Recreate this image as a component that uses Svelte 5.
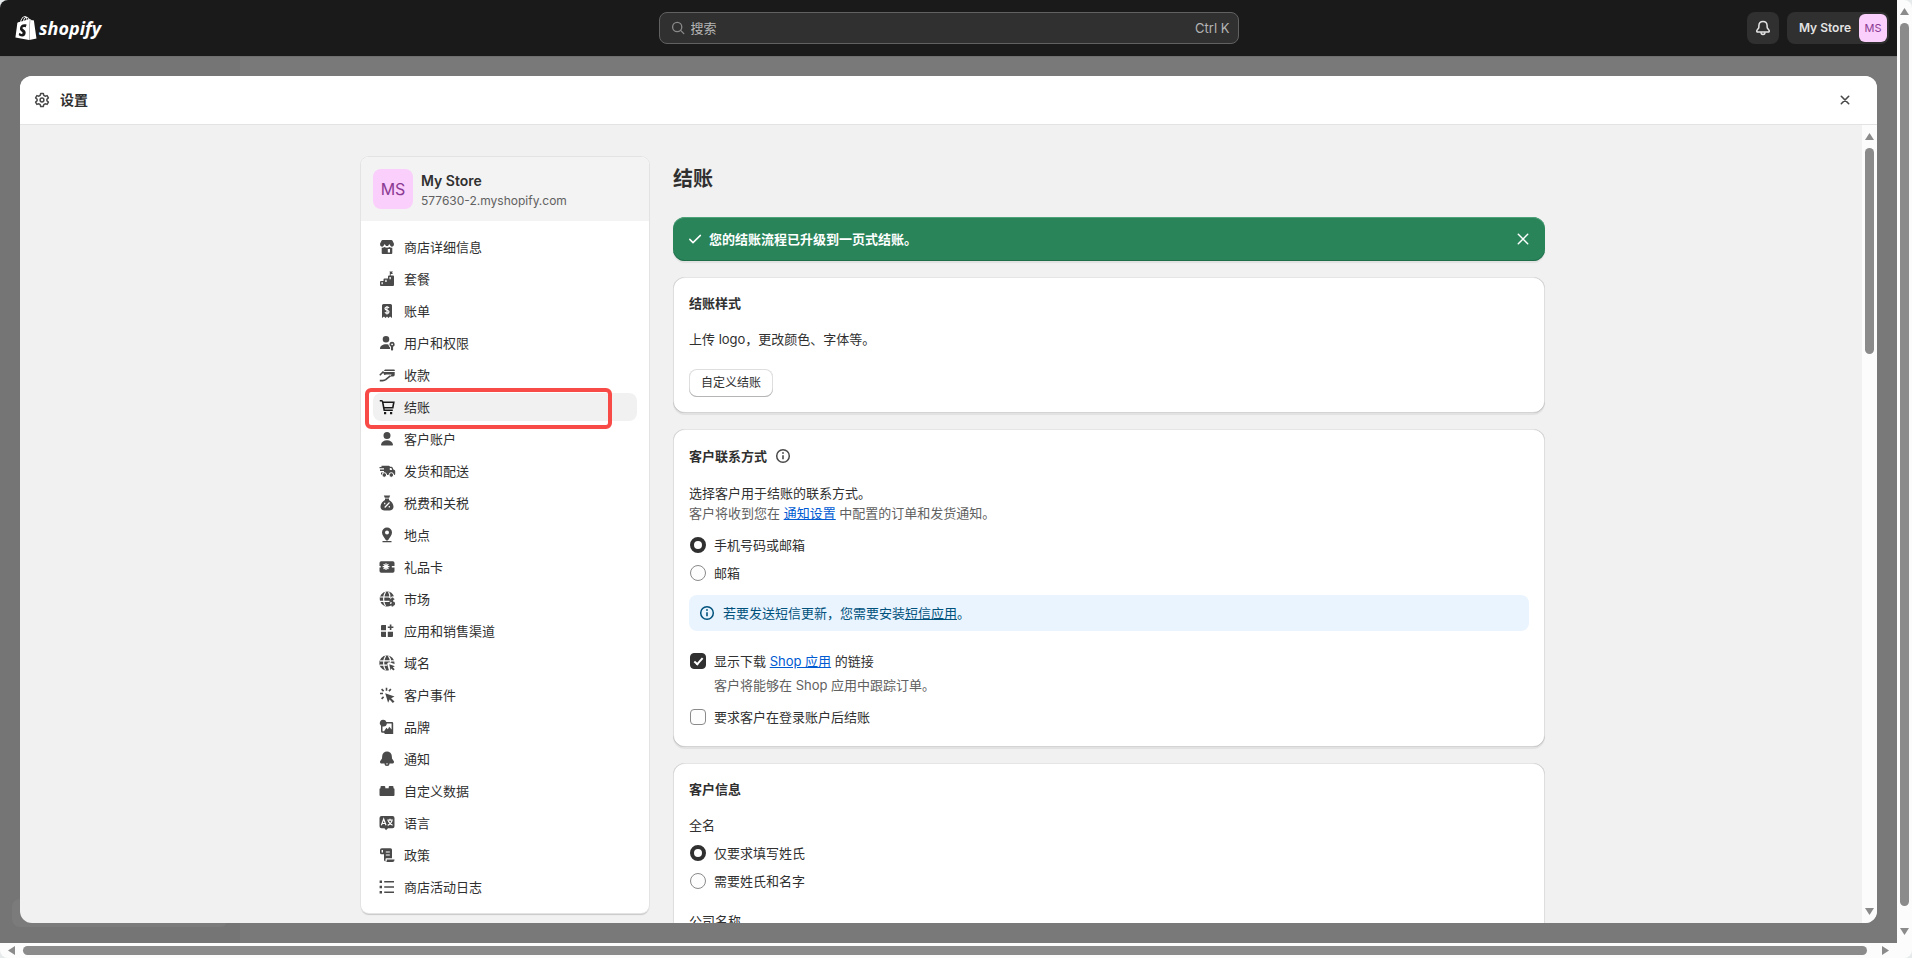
<script>
  // fill: solid shapes, cut: white strokes over them, line: strokes in the icon colour
  const icons = {
    store: {
      fill: 'M5.600 3h8.800c.5 0 .9.2 1.100.7L16.900 6.600v1.100a1.900 1.900 0 0 1-3.300 1.300L12.300 7l-1.300 2H9L7.700 7 6.400 9a1.900 1.900 0 0 1-3.300-1.300V6.600l1.400-2.900c.2-.5.6-.7 1.100-.7zM4.700 10.700c1 .2 2 0 2.700-.7 1.400 1.100 3.800 1.100 5.200 0 .7.7 1.700.9 2.700.7V16a1 1 0 0 1-1 1H5.700a1 1 0 0 1-1-1zM10.800 12v3.500h2.200V12z'
    },
    plan: {
      fill: 'M3 13a1 1 0 0 1 1-1h2.500v-1.500a1 1 0 0 1 1-1H11V7.500a1 1 0 0 1 1-1h4a1 1 0 0 1 1 1V16a1 1 0 0 1-1 1H4a1 1 0 0 1-1-1zM4.500 13.300v2h1.300v-2zM8.300 10.800v2.200h1.300v-2.200zM12.500 8v2.200h1.300V8zM12.300 2.500h3.600l-.8 1.300.8 1.200h-2.200v1.500h-.9V3z'
    },
    bill: {
      fill: 'M6.500 3h7A1.500 1.500 0 0 1 15 4.500V17l-2-1.400-1.500 1.400-1.500-1.400L8.500 17 7 15.600 5 17V4.500A1.500 1.500 0 0 1 6.500 3z',
      cut: 'M12 7c-.4-.8-1.200-1-2-1-1.100 0-2 .6-2 1.600 0 2.300 4 1 4 3.200 0 1-.9 1.600-2 1.600-.9 0-1.700-.3-2-1.100M10 4.900v8.600'
    },
    users: {
      fill: 'M12.300 6.300a3.300 3.300 0 1 1-6.600 0 3.300 3.300 0 0 1 6.600 0zM3 15.800c0-2.900 2.700-4.500 6-4.500 1 0 1.900.1 2.600.4.100 1.300.8 2.200 1.500 2.700V16H3.200a.2.200 0 0 1-.2-.2zM15.100 8.800a2.600 2.600 0 0 1 1 5V17l-1.100.7-1-.7v-3.200a2.600 2.600 0 0 1 1.100-5zM15.100 10.400a.9.900 0 1 0 0 1.800.9.900 0 0 0 0-1.800z'
    },
    pay: {
      fill: 'M8 4.500h9a.8.8 0 0 1 .8.800V6H6.800zM5.700 7h12v2.800a1.600 1.600 0 0 1-1.600 1.600h-3.400l2-1.900H9.600L7.300 10z',
      line: 'M2.800 10.300 6.500 6.500M2.800 15.600h2.800c1.200 0 2.200-.2 3.100-.9l4.600-3.900'
    },
    cart: {
      line: 'M2.800 3.800h1.700c.6 0 1 .4 1.100.9L7.200 13.200H15.800M5.800 5.300h11l-1 5.400H7',
      fill: 'M7 15h2.200v2.200H7zM13 15h2.200v2.200H13z'
    },
    person: {
      fill: 'M13.500 6.500a3.500 3.500 0 1 1-7 0 3.500 3.500 0 0 1 7 0zM4 15.800c.4-2.900 2.900-4.500 6-4.500s5.600 1.600 6 4.500a.7.700 0 0 1-.7.700H4.700a.7.700 0 0 1-.7-.7z'
    },
    truck: {
      fill: 'M4.500 4.800h7.300c.6 0 1 .4 1.200 1h1.300c.6 0 1.200.4 1.400 1l.7 1.700 1.100.6c.5.300.7.6.7 1.100V13a1 1 0 0 1-1 1H5a1 1 0 0 1-1-1v-1.600h3V10H3V8.600h4V7.300H2.500V6h2z M12.800 7v2h2.300l-.7-2z',
      wheels: [7.3, 14.3]
    },
    tax: {
      fill: 'M6.800 2.500h6.400l-1 2.300H7.800zM8 5.600h4v1.300c2.500 1.300 4.500 4 4.500 6.700 0 2.600-1.500 3.900-4 3.900h-5c-2.500 0-4-1.300-4-3.900 0-2.700 2-5.400 4.500-6.700z',
      cut: 'm7.700 14.500 4.800-5M7.700 9.700v1.500M12.300 12.900v1.500'
    },
    pin: {
      fill: 'M10 2.500a5 5 0 0 1 5 5c0 2.900-2.300 4.800-3.600 7.300-.5 1.100-2.300 1.100-2.800 0C7.300 12.300 5 10.400 5 7.500a5 5 0 0 1 5-5zM10 5.500a2 2 0 1 0 0 4 2 2 0 0 0 0-4zM5.500 15.900h9v1.400h-9z'
    },
    gift: {
      fill: 'M4.200 4.300h11.600a1.700 1.700 0 0 1 1.700 1.700v2.900h-2.700v1.500h2.700V14a1.700 1.700 0 0 1-1.700 1.700H4.200A1.700 1.700 0 0 1 2.500 14v-3.600h1.200V8.900H2.500V6a1.700 1.700 0 0 1 1.700-1.700z',
      cut: 'M9 6.200v6.800M5.600 9.600h6.800M6.600 7.200l4.800 4.800M11.400 7.200 6.600 12'
    },
    market: {
      fill: 'M10 2.500c3.300 0 6 2 7 4.900-2.600-.4-4.200 1.300-4.100 3 .1 1.100.6 1.900 1.200 2.500-1 .2-1.400 1.300-1 2.200l.9 1.400a7.500 7.500 0 1 1-4-14z',
      cut: 'M3 8h10.500M3 12.300h9.500M8.500 3C6 7 6 13 8.500 17M11.600 3c1.200 2 1.500 4 1.200 6',
      line: 'M17 10.600c-.4-.7-1-.9-1.700-.9-1 0-1.700.6-1.700 1.500 0 2 3.700 1.200 3.700 3.200 0 1-.8 1.600-1.900 1.600-.8 0-1.600-.3-1.900-1.100M15.400 8.500v9'
    },
    apps: {
      fill: 'M5 4h4v5.200H4V5a1 1 0 0 1 1-1zM4 10.800h5V16H5a1 1 0 0 1-1-1zM10.800 10.800H16V15a1 1 0 0 1-1 1h-4.200z',
      line: 'M13.600 3.500v5.600M10.800 6.300h5.600'
    },
    domain: {
      fill: 'M10 2.500a7.500 7.500 0 0 1 7.500 7.500v1l-4.400-1.500c-2-.7-3.300.7-2.700 2.500l1.500 5.200A7.500 7.500 0 1 1 10 2.500zM12.300 11.300l5.600 1.900-2.100 1 1.900 2-1.400 1.400-2-2-.8 1.800z',
      cut: 'M3 7.800h14M3 12.200h7M8.600 3C6 7 6 13 8.500 17M11.500 3c1.700 2 2.300 4 2.100 6.500'
    },
    events: {
      fill: 'M8.200 8.200l9.300 3.400-3.400 1.600 3.400 3.200-1.700 1.600-3.200-3.400-1.500 3.200z',
      line: 'M9.500 2.700v3M3 8.500h3M4.600 4.100l2 2M13.900 4.100l-2 2M4.600 13.900l2-2'
    },
    brand: {
      fill: 'M6.300 2.800a3.300 3.300 0 0 1 3.100 2.200H15a1.200 1.200 0 0 1 1.200 1.200V17H8l-1-1.200H5.500A1.500 1.500 0 0 1 4 14.300V8.700A3.300 3.300 0 0 1 6.300 2.800zM9.800 6.500c0 1.700-1.300 3-3 3.100l-1.300-.1v4.800h1.600l2.300-3.500 1.500 1.500 1.300-2.600 2.400 2.800v-6z'
    },
    bell: {
      fill: 'M10 2.500a4.800 4.800 0 0 1 4.800 4.600l.2 2.500 1.700 2.400c.8 1.200 0 2.600-1.300 2.600h-2.900a2.500 2.500 0 0 1-5 0H4.600c-1.300 0-2.100-1.400-1.300-2.600L5 9.600l.2-2.500A4.800 4.800 0 0 1 10 2.500zM9 14.600a1 1 0 0 0 2 0z'
    },
    data: {
      fill: 'M4.500 5h2.800a1 1 0 0 1 1 1v1.200h3.400V6a1 1 0 0 1 1-1h2.800a1 1 0 0 1 1 1v1.300c.6.1 1 .5 1 1V14a1 1 0 0 1-1 1H3.500a1 1 0 0 1-1-1V8.300c0-.5.4-.9 1-1V6a1 1 0 0 1 1-1z'
    },
    lang: {
      fill: 'M4.500 3h11a2 2 0 0 1 2 2v8.300a2 2 0 0 1-2 2H11L9 17.300l-1.500-2h-3a2 2 0 0 1-2-2V5a2 2 0 0 1 2-2z',
      cut: 'M4.400 12.200 6.700 6 9 12.200M5.200 10.500h3M10.300 7.200h5.500M13 5.700v1.500M11.300 8c.8 2 2.200 3.500 4.300 4.300M15 8c-.7 2-2.200 3.600-4.300 4.400'
    },
    policy: {
      fill: 'M4.800 3.200h8.700A1.500 1.500 0 0 1 15 4.700v8.500H9.500c-.7 0-1 .5-1 1.200v2.200A1.800 1.800 0 0 1 7 15V9.200H4.500A1.500 1.500 0 0 1 3 7.700V5a1.800 1.800 0 0 1 1.800-1.800zM4.600 4.900v2.700H6V4.900zM9.800 14.500h7.700v.5a2 2 0 0 1-2 2H9.200c.6-.6.6-1.400.6-2.500z',
      cut: 'M8.800 7h4M8.800 10h4'
    },
    list: {
      fill: 'M2.600 3.600h2.400v2.400H2.600zM2.600 8.800h2.400v2.400H2.600zM2.600 14h2.400v2.400H2.600z',
      line: 'M7.200 4.800H17M7.200 10H17M7.200 15.200H17'
    }
  };

  const menu = [
    { icon: 'store', label: '商店详细信息' },
    { icon: 'plan', label: '套餐' },
    { icon: 'bill', label: '账单' },
    { icon: 'users', label: '用户和权限' },
    { icon: 'pay', label: '收款' },
    { icon: 'cart', label: '结账' },
    { icon: 'person', label: '客户账户' },
    { icon: 'truck', label: '发货和配送' },
    { icon: 'tax', label: '税费和关税' },
    { icon: 'pin', label: '地点' },
    { icon: 'gift', label: '礼品卡' },
    { icon: 'market', label: '市场' },
    { icon: 'apps', label: '应用和销售渠道' },
    { icon: 'domain', label: '域名' },
    { icon: 'events', label: '客户事件' },
    { icon: 'brand', label: '品牌' },
    { icon: 'bell', label: '通知' },
    { icon: 'data', label: '自定义数据' },
    { icon: 'lang', label: '语言' },
    { icon: 'policy', label: '政策' },
    { icon: 'list', label: '商店活动日志' }
  ];

  let active = $state('cart');
  let contact = $state('phone');
  let fullName = $state('last');
  let showShopLink = $state(true);
  let requireLogin = $state(false);
  let bannerOpen = $state(true);

  function select(e, icon) {
    e.preventDefault();
    active = icon;
  }
</script>

{#snippet infoIcon()}
  <svg width="20" height="20" viewBox="0 0 20 20" fill="none" stroke="currentColor" stroke-width="1.5">
    <circle cx="10" cy="10" r="6.300" />
    <path d="M10 9.300v4" stroke-width="1.600" />
    <circle cx="10" cy="7" r=".9" fill="currentColor" stroke="none" />
  </svg>
{/snippet}

{#snippet scrollbar(dir, size)}
  <div class="scrollbar {dir}" aria-hidden="true">
    <i class="arrow back"></i>
    <div class="track"><div class="thumb" style="flex-basis: {size}%"></div></div>
    <i class="arrow forward"></i>
  </div>
{/snippet}

<div class="window">
  <div class="viewport">
    <header class="topbar">
      <a class="logo" href="#home">
        <svg width="24" height="24" viewBox="0 0 24 24" fill="currentColor">
          <path d="M15.337 23.979l7.216-1.561s-2.604-17.613-2.625-17.730c-.018-.116-.114-.192-.211-.192s-1.929-.136-1.929-.136-1.275-1.274-1.439-1.411c-.045-.037-.075-.057-.121-.074l-.914 21.104h.023zM11.710 11.305s-.81-.424-1.774-.424c-1.447 0-1.504.906-1.504 1.141 0 1.232 3.240 1.715 3.240 4.629 0 2.295-1.440 3.760-3.406 3.760-2.354 0-3.540-1.465-3.540-1.465l.646-2.086s1.245 1.066 2.280 1.066c.675 0 .975-.545.975-.932 0-1.619-2.654-1.694-2.654-4.359-.034-2.237 1.571-4.416 4.827-4.416 1.257 0 1.875.361 1.875.361l-.945 2.715-.02.01zM11.170.83c.136 0 .271.038.405.135-.984.465-2.064 1.639-2.508 3.992-.656.213-1.293.405-1.889.578C7.697 3.750 8.951.84 11.170.84V.83zm1.235 2.949v.135c-.754.232-1.583.484-2.394.736.466-1.777 1.333-2.645 2.085-2.971.193.501.309 1.176.309 2.100zm.539-2.234c.694.074 1.141.867 1.429 1.755-.349.114-.735.231-1.158.366v-.252c0-.752-.096-1.371-.271-1.871v.002zm2.992 1.289c-.02 0-.06.021-.078.021s-.289.075-.714.21c-.423-1.233-1.176-2.370-2.508-2.370h-.115C12.135.209 11.669 0 11.265 0 8.159 0 6.675 3.877 6.210 5.846c-1.194.365-2.063.636-2.160.674-.675.213-.694.232-.772.87-.075.462-1.830 14.063-1.830 14.063L15.009 24l.927-21.166z" />
        </svg>
        <span>shopify</span>
      </a>

      <label class="search">
        <svg width="14" height="14" viewBox="0 0 14 14" fill="none" stroke="currentColor" stroke-width="1.3" stroke-linecap="round">
          <circle cx="6.200" cy="6" r="4.600" />
          <path d="m9.600 9.400 3.200 3.200" />
        </svg>
        <input type="text" placeholder="搜索" aria-label="搜索" />
        <kbd>Ctrl K</kbd>
      </label>

      <div class="actions">
        <button class="bell-btn" aria-label="通知">
          <svg width="20" height="20" viewBox="0 0 20 20" fill="none" stroke="currentColor" stroke-width="1.5" stroke-linejoin="round">
            <path d="M10 3.600c-2.300 0-4 1.700-4.100 4l-.1 2.100-1.900 2.700c-.5.8 0 1.600.9 1.600h10.400c.9 0 1.400-.8.900-1.600l-1.900-2.700-.1-2.100c-.1-2.300-1.800-4-4.100-4z" />
            <path d="M8 14.200c0 1.300.8 2.200 2 2.200s2-.9 2-2.200" />
          </svg>
        </button>
        <button class="store-btn">
          <span>My Store</span>
          <span class="avatar small">MS</span>
        </button>
      </div>
    </header>

    <div class="backdrop">
      <div class="behind" aria-hidden="true"><div class="behind-item"></div></div>

      <section class="modal">
        <div class="modal-head">
          <svg width="20" height="20" viewBox="0 0 20 20" fill="none" stroke="#4a4a4a" stroke-width="1.500" stroke-linejoin="round">
            <path d="M8.700 3.400h2.600l.5 2 1.300.8 2-.6 1.300 2.300-1.500 1.400v1.400l1.500 1.400-1.300 2.300-2-.6-1.300.8-.5 2H8.700l-.5-2-1.300-.8-2 .6-1.300-2.300 1.500-1.400V9.300L3.600 7.900l1.300-2.300 2 .6 1.300-.8z" />
            <circle cx="10" cy="10" r="1.900" />
          </svg>
          <h2>设置</h2>
          <button class="icon-btn" aria-label="关闭">
            <svg width="10" height="10" viewBox="0 0 10 10" fill="none" stroke="#4a4a4a" stroke-width="1.600" stroke-linecap="round"><path d="m1.300 1.300 7.400 7.400M8.700 1.300 1.300 8.700" /></svg>
          </button>
        </div>

        <div class="modal-body">
          <div class="scroll">
            <div class="page">
              <aside class="sidebar">
                <div class="store">
                  <span class="avatar">MS</span>
                  <div class="store-text">
                    <div class="store-name">My Store</div>
                    <div class="store-url">577630-2.myshopify.com</div>
                  </div>
                </div>
                <nav>
                  {#each menu as item (item.icon)}
                    {@const icon = icons[item.icon]}
                    <a
                      href="#{item.icon}"
                      class="item"
                      class:active={item.icon === active}
                      onclick={(e) => select(e, item.icon)}
                    >
                      <svg width="20" height="20" viewBox="0 0 20 20" fill="none" stroke-width="1.600">
                        {#if icon.fill}
                          <path d={icon.fill} fill="currentColor" fill-rule="evenodd" />
                        {/if}
                        {#if icon.cut}
                          <path d={icon.cut} stroke="#fff" stroke-width="1.200" />
                        {/if}
                        {#if icon.line}
                          <path d={icon.line} stroke="currentColor" />
                        {/if}
                        {#each icon.wheels ?? [] as cx}
                          <circle {cx} cy="14" r="2.300" fill="currentColor" stroke="#fff" stroke-width="1" />
                        {/each}
                      </svg>
                      <span>{item.label}</span>
                      {#if item.icon === 'cart'}<i class="marker"></i>{/if}
                    </a>
                  {/each}
                </nav>
              </aside>

              <main>
                <h1>结账</h1>

                {#if bannerOpen}
                  <div class="banner">
                    <svg width="20" height="20" viewBox="0 0 20 20" fill="none" stroke="currentColor" stroke-width="1.500" stroke-linecap="round" stroke-linejoin="round"><path d="m4.800 10.400 3.200 3.200 7.400-7.200" /></svg>
                    <strong>您的结账流程已升级到一页式结账。</strong>
                    <button class="icon-btn" aria-label="关闭" onclick={() => (bannerOpen = false)}>
                      <svg width="12" height="12" viewBox="0 0 12 12" fill="none" stroke="currentColor" stroke-width="1.500" stroke-linecap="round"><path d="m1.300 1.300 9.400 9.400M10.700 1.300 1.300 10.700" /></svg>
                    </button>
                  </div>
                {/if}

                <section class="card">
                  <h3>结账样式</h3>
                  <p>上传 logo，更改颜色、字体等。</p>
                  <button class="btn">自定义结账</button>
                </section>

                <section class="card">
                  <h3 class="with-icon">客户联系方式 {@render infoIcon()}</h3>
                  <p>选择客户用于结账的联系方式。</p>
                  <p class="subdued">客户将收到您在 <a href="#notifications">通知设置</a> 中配置的订单和发货通知。</p>
                  <div class="choices spaced">
                    <label class="choice"><input type="radio" name="contact" value="phone" bind:group={contact} />手机号码或邮箱</label>
                    <label class="choice"><input type="radio" name="contact" value="email" bind:group={contact} />邮箱</label>
                  </div>
                  <div class="notice">
                    {@render infoIcon()}
                    <span>若要发送短信更新，您需要安装<a href="#sms">短信应用</a>。</span>
                  </div>
                  <div class="choice">
                    <input id="shop-link" type="checkbox" bind:checked={showShopLink} />
                    <label for="shop-link">显示下载 <a href="#shop">Shop 应用</a> 的链接</label>
                  </div>
                  <p class="help">客户将能够在 Shop 应用中跟踪订单。</p>
                  <label class="choice"><input type="checkbox" bind:checked={requireLogin} />要求客户在登录账户后结账</label>
                </section>

                <section class="card">
                  <h3>客户信息</h3>
                  <p>全名</p>
                  <div class="choices">
                    <label class="choice"><input type="radio" name="name" value="last" bind:group={fullName} />仅要求填写姓氏</label>
                    <label class="choice"><input type="radio" name="name" value="both" bind:group={fullName} />需要姓氏和名字</label>
                  </div>
                  <p class="next-group">公司名称</p>
                </section>
              </main>
            </div>
          </div>
          {@render scrollbar('vertical', 27.4)}
        </div>
      </section>
    </div>
  </div>
  {@render scrollbar('vertical', 98.4)}
  {@render scrollbar('horizontal', 99.6)}
  <div class="corner"></div>
</div>

<style>
  :global(body) {
    background: #e6eaea;
  }

  .window {
    display: grid;
    grid-template-columns: minmax(0, 1fr) 15px;
    grid-template-rows: minmax(0, 1fr) 15px;
    height: 100vh;
    border-radius: 8px;
    overflow: hidden;
    font-family: Inter, 'Noto Sans CJK SC', sans-serif;
    font-size: 13px;
    line-height: 20px;
    color: #303030;
  }

  .window *,
  .window *::after {
    box-sizing: border-box;
  }

  h1, h2, h3, p {
    margin: 0;
  }

  button {
    font: inherit;
    color: inherit;
    border: none;
    padding: 0;
    cursor: pointer;
  }

  svg {
    flex: none;
  }

  .viewport {
    display: flex;
    flex-direction: column;
    min-width: 0;
  }

  .corner {
    background: #fcfcfc;
  }

  /* top bar */
  .topbar {
    display: grid;
    grid-template-columns: 1fr minmax(0, 580px) 1fr;
    align-items: center;
    height: 56px;
    flex: none;
    padding: 0 8px;
    background: #1a1a1a;
  }

  .logo {
    display: flex;
    align-items: center;
    gap: 1px;
    padding-left: 6px;
    color: #fff;
    text-decoration: none;
  }

  .logo span {
    font-family: 'Open Sans', sans-serif;
    font-size: 18px;
    font-style: italic;
    font-weight: 700;
  }

  .search {
    display: flex;
    align-items: center;
    gap: 6px;
    height: 32px;
    padding: 0 8px 0 11px;
    background: #303030;
    border: 1px solid #616161;
    border-radius: 8px;
    color: #b5b5b5;
  }

  .search svg {
    color: #8a8a8a;
  }

  .search input {
    flex: 1;
    min-width: 0;
    padding: 0;
    border: none;
    outline: none;
    background: none;
    font: inherit;
    color: inherit;
  }

  .search input::placeholder {
    color: #b5b5b5;
  }

  .search kbd {
    font: inherit;
  }

  .actions {
    display: flex;
    justify-content: flex-end;
    gap: 8px;
  }

  .bell-btn,
  .store-btn {
    display: flex;
    align-items: center;
    justify-content: center;
    height: 32px;
    background: #303030;
    border-radius: 8px;
    color: #e3e3e3;
  }

  .bell-btn {
    width: 32px;
  }

  .store-btn {
    gap: 8px;
    padding: 0 2px 0 12px;
    font-size: 12px;
    font-weight: 600;
  }

  .avatar {
    display: flex;
    align-items: center;
    justify-content: center;
    flex: none;
    width: 40px;
    height: 40px;
    border-radius: 8px;
    background: #facffb;
    color: #8b3a93;
    font-size: 16px;
  }

  .avatar.small {
    width: 28px;
    height: 28px;
    border-radius: 6px;
    font-size: 11px;
    font-weight: 400;
  }

  /* dimmed page and modal */
  .backdrop {
    position: relative;
    display: flex;
    flex: 1;
    min-height: 0;
    padding: 19px 20px 20px;
    background: #797979;
    border-top: 1px solid #6f6f6f;
  }

  .behind {
    position: absolute;
    inset: 0 auto 0 0;
    display: flex;
    align-items: flex-end;
    width: 240px;
    padding: 0 12px 16px;
    background: #757575;
  }

  .behind-item {
    flex: 1;
    height: 28px;
    border-radius: 8px;
    background: #7b7b7b;
  }

  .modal {
    position: relative;
    display: flex;
    flex-direction: column;
    flex: 1;
    min-width: 0;
    border-radius: 12px;
    overflow: hidden;
    background: #f1f1f1;
  }

  .modal-head {
    display: flex;
    align-items: center;
    gap: 8px;
    height: 49px;
    flex: none;
    padding: 0 18px 0 12px;
    background: #fff;
    border-bottom: 1px solid #e3e3e3;
  }

  .modal-head h2 {
    flex: 1;
    font-size: 14px;
    font-weight: 600;
  }

  .icon-btn {
    display: flex;
    align-items: center;
    justify-content: center;
    width: 28px;
    height: 28px;
    background: none;
    border-radius: 8px;
  }

  .modal-body {
    display: flex;
    flex: 1;
    min-height: 0;
  }

  .scroll {
    flex: 1;
    min-width: 0;
    overflow: hidden auto;
    scrollbar-width: none;
  }

  .page {
    display: flex;
    align-items: flex-start;
    gap: 24px;
    max-width: 1208px;
    margin: 0 auto;
    padding: 32px 0 32px 24px;
  }

  /* settings navigation */
  .sidebar {
    width: 288px;
    flex: none;
    border-radius: 8px;
    background: #fff;
    overflow: hidden;
    box-shadow: 0 0 0 1px #e3e3e3, 0 2px 1px #c8c8c8;
  }

  .store {
    display: flex;
    align-items: flex-start;
    gap: 8px;
    padding: 12px 12px 10px;
    background: #f3f3f3;
  }

  .store-text {
    padding-top: 2px;
  }

  .store-name {
    font-size: 14px;
    font-weight: 600;
  }

  .store-url {
    font-size: 12px;
    color: #616161;
  }

  nav {
    display: flex;
    flex-direction: column;
    gap: 4px;
    padding: 12px;
  }

  .item {
    position: relative;
    display: flex;
    align-items: center;
    gap: 7px;
    height: 28px;
    padding: 0 4px;
    border-radius: 8px;
    color: #303030;
    text-decoration: none;
  }

  .item svg {
    color: #4a4a4a;
  }

  .item:hover,
  .item.active {
    background: #f1f1f1;
  }

  .item.active svg {
    color: #1a1a1a;
  }

  .marker {
    position: absolute;
    z-index: 1;
    inset: -5px 25px -8px -8px;
    border: 4px solid #f84b47;
    border-radius: 6px;
    pointer-events: none;
  }

  /* content */
  main {
    display: flex;
    flex-direction: column;
    gap: 16px;
    flex: 1;
    min-width: 0;
  }

  h1 {
    padding: 8px 0;
    font-size: 20px;
    font-weight: 700;
    line-height: 28px;
  }

  .banner {
    display: flex;
    align-items: center;
    gap: 4px;
    height: 44px;
    padding: 0 8px 0 12px;
    border-radius: 12px;
    background: #29845a;
    color: #fff;
    box-shadow: inset 0 1px 0 #4fa37b, inset 0 -1px 0 #1f6e4a, 0 2px 1px rgba(26, 26, 26, 0.07);
  }

  .banner strong {
    flex: 1;
    font-weight: 700;
  }

  .card {
    padding: 16px;
    border-radius: 12px;
    background: #fff;
    box-shadow:
      0 2px 1px rgba(26, 26, 26, 0.07),
      inset 1px 0 0 rgba(0, 0, 0, 0.13),
      inset -1px 0 0 rgba(0, 0, 0, 0.13),
      inset 0 -1px 0 rgba(0, 0, 0, 0.17),
      inset 0 1px 0 rgba(204, 204, 204, 0.5);
  }

  h3 {
    margin-bottom: 16px;
    font-size: 13px;
    font-weight: 600;
  }

  .with-icon {
    display: flex;
    align-items: center;
    gap: 6px;
    height: 22px;
  }

  .with-icon :global(svg) {
    color: #4a4a4a;
  }

  .subdued,
  .help {
    color: #616161;
  }

  .subdued a,
  .choice a {
    color: #005bd3;
  }

  .btn {
    display: block;
    height: 28px;
    margin-top: 20px;
    padding: 0 12px;
    border-radius: 8px;
    background: #fff;
    font-size: 12px;
    box-shadow: inset 0 -1px 0 #b5b5b5, inset 0 0 0 1px #dedede;
  }

  .choices {
    margin-top: 4px;
  }

  .choices.spaced {
    margin-top: 8px;
  }

  .choice {
    display: flex;
    align-items: center;
    gap: 8px;
    height: 28px;
    padding-left: 1px;
  }

  .choice input {
    appearance: none;
    display: grid;
    place-content: center;
    width: 16px;
    height: 16px;
    margin: 0;
    flex: none;
    border: 1px solid #8a8a8a;
    border-radius: 4px;
    background: #fdfdfd;
  }

  .choice input[type='radio'] {
    border-radius: 50%;
  }

  .choice input[type='radio']:checked {
    border: 4px solid #303030;
    background: #fff;
  }

  .choice input[type='checkbox']:checked {
    border-color: #303030;
    background: #303030;
  }

  .choice input[type='checkbox']:checked::after {
    content: '';
    width: 5px;
    height: 9px;
    margin-bottom: 2px;
    border: solid #fff;
    border-width: 0 2px 2px 0;
    transform: rotate(42deg);
  }

  .notice {
    display: flex;
    align-items: center;
    gap: 6px;
    margin: 8px 0 16px;
    padding: 8px;
    border-radius: 8px;
    background: #eaf4ff;
    color: #00527c;
  }

  .notice a {
    color: inherit;
  }

  .help {
    padding-left: 25px;
    margin-bottom: 8px;
  }

  .next-group {
    margin-top: 16px;
  }

  /* scrollbars */
  .scrollbar {
    display: flex;
    align-items: center;
    gap: 8px;
    padding: 8px 3px;
    background: #fcfcfc;
  }

  .scrollbar.vertical {
    flex-direction: column;
    width: 15px;
  }

  .scrollbar.horizontal {
    height: 15px;
    padding: 3px 8px;
  }

  .track {
    display: flex;
    flex: 1;
    align-self: stretch;
  }

  .vertical .track {
    flex-direction: column;
  }

  .thumb {
    border-radius: 5px;
    background: #8b8b8b;
  }

  .arrow {
    flex: none;
    width: 9px;
    height: 7px;
    background: #8b8b8b;
    clip-path: polygon(50% 0, 100% 100%, 0 100%);
  }

  .vertical .forward {
    clip-path: polygon(0 0, 100% 0, 50% 100%);
  }

  .horizontal .arrow {
    width: 7px;
    height: 9px;
    clip-path: polygon(0 50%, 100% 0, 100% 100%);
  }

  .horizontal .forward {
    clip-path: polygon(0 0, 100% 50%, 0 100%);
  }
</style>
